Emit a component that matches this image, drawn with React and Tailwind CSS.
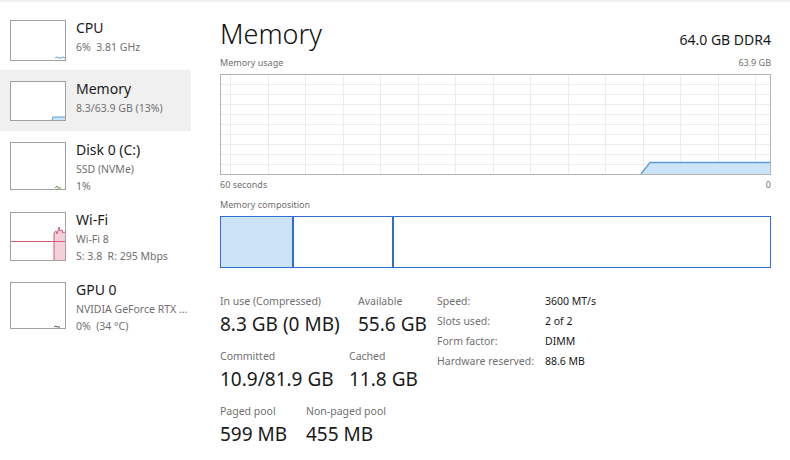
import React from 'react';

const font = { fontFamily: '"Noto Sans", "Open Sans", sans-serif' };

// little graphs in the left list
function Thumb({ h, kind }) {
  return (
    <div className="w-[56px] shrink-0 border border-[#a0a0a0] bg-white" style={{ height: h }}>
      <svg width="54" height={h - 2} viewBox={`0 0 54 ${h - 2}`} className="block">
        {kind === 'cpu' && (
          <polyline points={`44,${h - 4} 46,${h - 5} 48,${h - 4} 50,${h - 4} 52,${h - 5} 54,${h - 4}`} fill="none" stroke="#5b9bd5" strokeWidth="1" />
        )}
        {kind === 'mem' && (
          <>
            <polygon points={`41,${h - 2} 42,${h - 5} 54,${h - 5} 54,${h - 2}`} fill="#cce4f7" />
            <polyline points={`41,${h - 2} 42,${h - 5} 54,${h - 5}`} fill="none" stroke="#5b9bd5" strokeWidth="1" />
          </>
        )}
        {kind === 'disk' && (
          <polyline points={`44,${h - 3} 46,${h - 5} 47,${h - 3} 50,${h - 3}`} fill="none" stroke="#6a9a3a" strokeWidth="1" />
        )}
        {kind === 'wifi' && (
          <>
            <polygon points={`43,${h - 2} 43,20 45,18 46,21 48,14 49,18 51,17 52,20 54,19 54,${h - 2}`} fill="#f4d0d8" />
            <polyline points={`43,${h - 2} 43,20 45,18 46,21 48,14 49,18 51,17 52,20 54,19`} fill="none" stroke="#d55a78" strokeWidth="1" />
            <line x1="0" y1="28.5" x2="54" y2="28.5" stroke="#d55a78" strokeWidth="1" />
          </>
        )}
        {kind === 'gpu' && (
          <polyline points={`43,${h - 3} 45,${h - 4} 46,${h - 3} 49,${h - 3}`} fill="none" stroke="#555" strokeWidth="1" />
        )}
      </svg>
    </div>
  );
}

function SideItem({ title, lines, h, boxH, pt, kind, active }) {
  return (
    <div className={`flex gap-[10px] pl-[10px] ${active ? 'bg-[#f0f0f0]' : ''}`} style={{ height: h, paddingTop: pt }}>
      <Thumb h={boxH} kind={kind} />
      <div className="flex flex-col -mt-[2px]">
        <div className="text-[14px] leading-[19px] text-[#1a1a1a] mb-[2px]">{title}</div>
        {lines.map((l) => (
          <div key={l} className="text-[10.5px] leading-[17px] text-[#707070] whitespace-pre">{l}</div>
        ))}
      </div>
    </div>
  );
}

function UsageChart() {
  const W = 551;
  const H = 101;
  const hLines = [];
  for (let i = 1; i < 10; i++) hLines.push(i * 10);
  const vLines = [];
  for (let x = 9; x < W; x += 37.5) vLines.push(Math.round(x) + 0.5);
  return (
    <div className="border border-[#b4b4b4] h-[101px]">
      <svg width={W - 2} height={H - 2} viewBox={`0 0 ${W - 2} ${H - 2}`} className="block">
        {hLines.map((y) => (
          <line key={'h' + y} x1="0" x2={W} y1={y - 0.5} y2={y - 0.5} stroke="#ececec" strokeWidth="1" />
        ))}
        {vLines.map((x) => (
          <line key={'v' + x} x1={x} x2={x} y1="0" y2={H} stroke="#ececec" strokeWidth="1" />
        ))}
        <polygon points={`420,99 429,87 549,87 549,99`} fill="#cce4f7" />
        <polyline points={`420,99 429,87.5 549,87.5`} fill="none" stroke="#5b9bd5" strokeWidth="1.3" />
      </svg>
    </div>
  );
}

function Stat({ label, value, w }) {
  return (
    <div className="flex flex-col" style={{ width: w }}>
      <div className="text-[10.5px] leading-[16px] text-[#707070] whitespace-nowrap">{label}</div>
      <div className="text-[19px] leading-[30px] text-[#1a1a1a] whitespace-nowrap">{value}</div>
    </div>
  );
}

export default function App() {
  return (
    <div className="w-[790px] h-[460px] bg-white overflow-hidden flex flex-col" style={font}>
      <div className="h-[2px] bg-[#f1f2ef]" />
      <div className="flex flex-1">
        {/* Side list */}
        <div className="w-[191px] shrink-0 flex flex-col pt-[8px]">
          <SideItem title="CPU" lines={['6%  3.81 GHz']} h={60} boxH={41} pt={10} kind="cpu" />
          <SideItem title="Memory" lines={['8.3/63.9 GB (13%)']} h={61} boxH={40} pt={11} kind="mem" active />
          <SideItem title="Disk 0 (C:)" lines={['SSD (NVMe)', '1%']} h={70} boxH={48} pt={11} kind="disk" />
          <SideItem title="Wi-Fi" lines={['Wi-Fi 8', 'S: 3.8  R: 295 Mbps']} h={70} boxH={49} pt={11} kind="wifi" />
          <SideItem title="GPU 0" lines={['NVIDIA GeForce RTX ...', '0%  (34 °C)']} h={70} boxH={47} pt={11} kind="gpu" />
        </div>

        {/* Main panel */}
        <div className="flex-1 pl-[29px] pr-[19px] pt-[14px] flex flex-col">
          <div className="flex items-end justify-between">
            <div className="text-[27px] leading-[36px] font-light text-[#111]">Memory</div>
            <div className="text-[14px] leading-[20px] text-[#1a1a1a] pb-[2px]">64.0 GB DDR4</div>
          </div>
          <div className="flex justify-between text-[9px] leading-[14px] text-[#707070] mt-[4px] mb-[4px]">
            <span>Memory usage</span>
            <span>63.9 GB</span>
          </div>
          <UsageChart />
          <div className="flex justify-between text-[9px] leading-[14px] text-[#707070] mt-[3px]">
            <span>60 seconds</span>
            <span>0</span>
          </div>
          <div className="text-[9px] leading-[14px] text-[#707070] mt-[6px]">Memory composition</div>
          <div className="mt-[4px] h-[52px] border border-[#2f6fcf] flex">
            <div className="w-[73px] bg-[#cce2f7] border-r-2 border-[#2f6fcf]" />
            <div className="w-[100px] border-r-2 border-[#2f6fcf]" />
            <div className="flex-1" />
          </div>

          <div className="flex items-start mt-[25px]">
            <div className="flex flex-col gap-[9px]">
              <div className="flex">
                <Stat label="In use (Compressed)" value="8.3 GB (0 MB)" w={138} />
                <Stat label="Available" value="55.6 GB" w={79} />
              </div>
              <div className="flex">
                <Stat label="Committed" value="10.9/81.9 GB" w={129} />
                <Stat label="Cached" value="11.8 GB" w={80} />
              </div>
              <div className="flex">
                <Stat label="Paged pool" value="599 MB" w={86} />
                <Stat label="Non-paged pool" value="455 MB" w={100} />
              </div>
            </div>
            <div className="grid grid-cols-[108px_auto] text-[10.5px] leading-[20px] -mt-[2px]">
              <div className="text-[#707070]">Speed:</div>
              <div className="text-[#1a1a1a]">3600 MT/s</div>
              <div className="text-[#707070]">Slots used:</div>
              <div className="text-[#1a1a1a]">2 of 2</div>
              <div className="text-[#707070]">Form factor:</div>
              <div className="text-[#1a1a1a]">DIMM</div>
              <div className="text-[#707070]">Hardware reserved:</div>
              <div className="text-[#1a1a1a]">88.6 MB</div>
            </div>
          </div>
        </div>
      </div>
    </div>
  );
}
